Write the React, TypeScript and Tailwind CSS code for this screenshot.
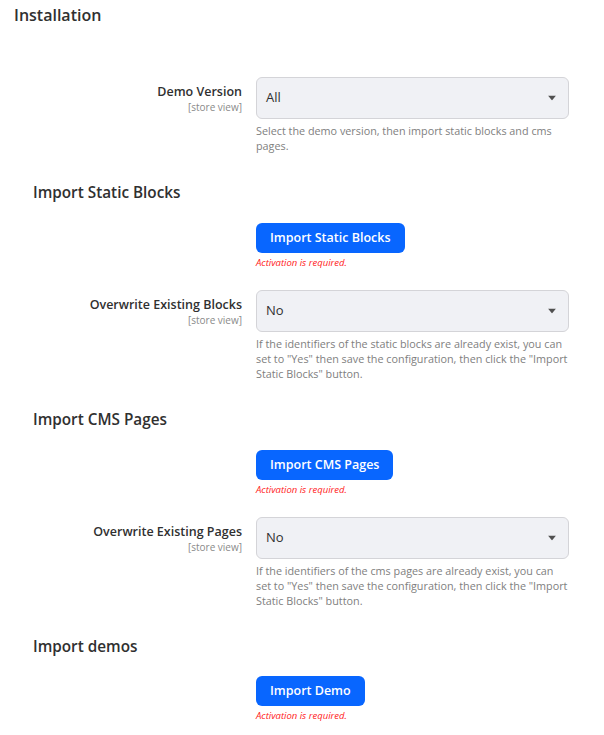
import React from "react";

function Arrow() {
  return (
    <svg width="8" height="5" viewBox="0 0 8 5" className="absolute right-[12px] top-1/2 -translate-y-1/2">
      <path d="M0 0 L8 0 L4 5 Z" fill="#505050" />
    </svg>
  );
}

function SelectRow({ label, value, help }: { label: string; value: string; help: React.ReactNode }) {
  return (
    <div className="flex">
      <div className="w-[242px] text-right pt-[7px]">
        <div className="text-[12.5px] font-semibold leading-[16px] text-[#303030]">{label}</div>
        <div className="text-[10px] leading-[14px] text-[#8a8a8a]">[store view]</div>
      </div>
      <div className="ml-[14px] w-[313px]">
        <div className="relative h-[42px] rounded-[6px] border border-[#d4d4d8] bg-[#f0f1f5] flex items-center pl-[9px] text-[13px] text-[#303030]">
          {value}
          <Arrow />
        </div>
        <div className="mt-[4px] text-[10.8px] leading-[15px] text-[#808080]">{help}</div>
      </div>
    </div>
  );
}

function ButtonRow({ text }: { text: string }) {
  return (
    <div className="pl-[256px]">
      <button className="h-[30px] px-[14px] rounded-[6px] bg-[#0866ff] text-white text-[12.5px] font-semibold leading-[30px]">
        {text}
      </button>
      <div className="mt-[3px] text-[9.5px] leading-[14px] italic text-[#ff2020]">Activation is required.</div>
    </div>
  );
}

function Heading({ children, className = "" }: { children: React.ReactNode; className?: string }) {
  return (
    <h3 className={"pl-[33px] text-[15.3px] font-semibold leading-[20px] text-[#303030] " + className}>{children}</h3>
  );
}

export default function App() {
  return (
    <div className="w-[604px] h-[735px] bg-white font-['Open_Sans',sans-serif] text-[#303030] overflow-hidden">
      <h2 className="pl-[14px] pt-[5px] text-[16px] font-semibold leading-[20px]">Installation</h2>
      <div className="mt-[52px]">
        <SelectRow
          label="Demo Version"
          value="All"
          help={<>Select the demo version, then import static blocks and cms pages.</>}
        />
      </div>
      <Heading className="mt-[29px]">Import Static Blocks</Heading>
      <div className="mt-[21px]">
        <ButtonRow text="Import Static Blocks" />
      </div>
      <div className="mt-[20px]">
        <SelectRow
          label="Overwrite Existing Blocks"
          value="No"
          help={<>If the identifiers of the static blocks are already exist, you can set to "Yes" then save the configuration, then click the "Import Static Blocks" button.</>}
        />
      </div>
      <Heading className="mt-[28px]">Import CMS Pages</Heading>
      <div className="mt-[21px]">
        <ButtonRow text="Import CMS Pages" />
      </div>
      <div className="mt-[20px]">
        <SelectRow
          label="Overwrite Existing Pages"
          value="No"
          help={<>If the identifiers of the cms pages are already exist, you can set to "Yes" then save the configuration, then click the "Import Static Blocks" button.</>}
        />
      </div>
      <Heading className="mt-[28px]">Import demos</Heading>
      <div className="mt-[20px]">
        <ButtonRow text="Import Demo" />
      </div>
    </div>
  );
}
